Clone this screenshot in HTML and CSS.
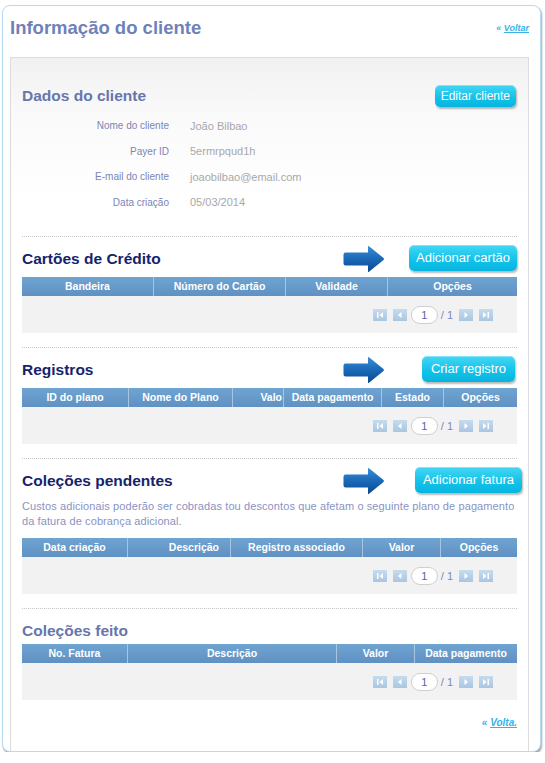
FILE: index.html
```html
<!DOCTYPE html>
<html lang="pt">
<head>
<meta charset="utf-8">
<title>Informação do cliente</title>
<link rel="stylesheet" href="styles.css">
</head>
<body>
<div class="page">
  <div class="top">
    <h1 class="title">Informação do cliente</h1>
    <span class="back back-top">« <a href="#">Voltar</a></span>
  </div>
  <div class="panel">
    <section class="sec sec-first">
      <div class="head head-sm">
        <h2 class="h h-muted">Dados do cliente</h2>
        <a class="btn btn-sm" href="#">Editar cliente</a>
      </div>
      <div class="fields">
        <span class="lbl">Nome do cliente</span><span class="val">João Bilbao</span>
        <span class="lbl">Payer ID</span><span class="val">5ermrpqud1h</span>
        <span class="lbl">E-mail do cliente</span><span class="val">joaobilbao@email.com</span>
        <span class="lbl">Data criação</span><span class="val">05/03/2014</span>
      </div>
    </section>

    <section class="sec">
      <div class="head">
        <h2 class="h">Cartões de Crédito</h2>
        <svg class="arrow" width="42" height="28" viewBox="0 0 42 28"><defs><linearGradient id="ag1" x1="0" y1="0" x2="0" y2="1"><stop offset="0" stop-color="#3a90d6"/><stop offset="0.45" stop-color="#1b6cba"/><stop offset="1" stop-color="#0a4990"/></linearGradient></defs><path d="M2.5 7.5 H25 V1.5 Q25 0.5 26 1.2 L40.5 13 Q41.5 14 40.5 15 L26 26.8 Q25 27.5 25 26.5 V20.5 H2.5 Q0.5 20.5 0.5 18.5 V9.5 Q0.5 7.5 2.5 7.5 Z" fill="url(#ag1)"/></svg>
        <span class="btn-slot"><a class="btn" href="#">Adicionar cartão</a></span>
      </div>
      <div class="thead cols-cards">
        <span class="th">Bandeira</span><span class="th">Número do Cartão</span><span class="th">Validade</span><span class="th">Opções</span>
      </div>
      <div class="tbody">
        <div class="pager">
          <span class="pg"><svg width="14" height="12" viewBox="0 0 14 12"><rect x="4" y="3" width="1.5" height="6" fill="#fff"/><path d="M10 3 V9 L6.5 6 Z" fill="#fff"/></svg></span>
          <span class="pg pg-gap"><svg width="14" height="12" viewBox="0 0 14 12"><path d="M8.5 3 V9 L5 6 Z" fill="#fff"/></svg></span>
          <span class="pg-input">1</span>
          <span class="pg-of">/ 1</span>
          <span class="pg pg-gap"><svg width="14" height="12" viewBox="0 0 14 12"><path d="M5.5 3 V9 L9 6 Z" fill="#fff"/></svg></span>
          <span class="pg pg-gap"><svg width="14" height="12" viewBox="0 0 14 12"><path d="M4 3 V9 L7.5 6 Z" fill="#fff"/><rect x="8.5" y="3" width="1.5" height="6" fill="#fff"/></svg></span>
        </div>
      </div>
    </section>

    <section class="sec">
      <div class="head">
        <h2 class="h">Registros</h2>
        <svg class="arrow" width="42" height="28" viewBox="0 0 42 28"><defs><linearGradient id="ag2" x1="0" y1="0" x2="0" y2="1"><stop offset="0" stop-color="#3a90d6"/><stop offset="0.45" stop-color="#1b6cba"/><stop offset="1" stop-color="#0a4990"/></linearGradient></defs><path d="M2.5 7.5 H25 V1.5 Q25 0.5 26 1.2 L40.5 13 Q41.5 14 40.5 15 L26 26.8 Q25 27.5 25 26.5 V20.5 H2.5 Q0.5 20.5 0.5 18.5 V9.5 Q0.5 7.5 2.5 7.5 Z" fill="url(#ag2)"/></svg>
        <span class="btn-slot"><a class="btn btn-reg" href="#">Criar registro</a></span>
      </div>
      <div class="thead cols-reg">
        <span class="th">ID do plano</span><span class="th">Nome do Plano</span><span class="th th-right">Valo</span><span class="th">Data pagamento</span><span class="th">Estado</span><span class="th">Opções</span>
      </div>
      <div class="tbody">
        <div class="pager">
          <span class="pg"><svg width="14" height="12" viewBox="0 0 14 12"><rect x="4" y="3" width="1.5" height="6" fill="#fff"/><path d="M10 3 V9 L6.5 6 Z" fill="#fff"/></svg></span>
          <span class="pg pg-gap"><svg width="14" height="12" viewBox="0 0 14 12"><path d="M8.5 3 V9 L5 6 Z" fill="#fff"/></svg></span>
          <span class="pg-input">1</span>
          <span class="pg-of">/ 1</span>
          <span class="pg pg-gap"><svg width="14" height="12" viewBox="0 0 14 12"><path d="M5.5 3 V9 L9 6 Z" fill="#fff"/></svg></span>
          <span class="pg pg-gap"><svg width="14" height="12" viewBox="0 0 14 12"><path d="M4 3 V9 L7.5 6 Z" fill="#fff"/><rect x="8.5" y="3" width="1.5" height="6" fill="#fff"/></svg></span>
        </div>
      </div>
    </section>

    <section class="sec">
      <div class="head">
        <h2 class="h">Coleções pendentes</h2>
        <svg class="arrow" width="42" height="28" viewBox="0 0 42 28"><defs><linearGradient id="ag3" x1="0" y1="0" x2="0" y2="1"><stop offset="0" stop-color="#3a90d6"/><stop offset="0.45" stop-color="#1b6cba"/><stop offset="1" stop-color="#0a4990"/></linearGradient></defs><path d="M2.5 7.5 H25 V1.5 Q25 0.5 26 1.2 L40.5 13 Q41.5 14 40.5 15 L26 26.8 Q25 27.5 25 26.5 V20.5 H2.5 Q0.5 20.5 0.5 18.5 V9.5 Q0.5 7.5 2.5 7.5 Z" fill="url(#ag3)"/></svg>
        <span class="btn-slot"><a class="btn btn-fat" href="#">Adicionar fatura</a></span>
      </div>
      <p class="desc">Custos adicionais poderão ser cobradas tou descontos que afetam o seguinte plano de pagamento da fatura de cobrança adicional.</p>
      <div class="thead cols-pend">
        <span class="th">Data criação</span><span class="th th-desc">Descrição</span><span class="th">Registro associado</span><span class="th">Valor</span><span class="th">Opções</span>
      </div>
      <div class="tbody">
        <div class="pager">
          <span class="pg"><svg width="14" height="12" viewBox="0 0 14 12"><rect x="4" y="3" width="1.5" height="6" fill="#fff"/><path d="M10 3 V9 L6.5 6 Z" fill="#fff"/></svg></span>
          <span class="pg pg-gap"><svg width="14" height="12" viewBox="0 0 14 12"><path d="M8.5 3 V9 L5 6 Z" fill="#fff"/></svg></span>
          <span class="pg-input">1</span>
          <span class="pg-of">/ 1</span>
          <span class="pg pg-gap"><svg width="14" height="12" viewBox="0 0 14 12"><path d="M5.5 3 V9 L9 6 Z" fill="#fff"/></svg></span>
          <span class="pg pg-gap"><svg width="14" height="12" viewBox="0 0 14 12"><path d="M4 3 V9 L7.5 6 Z" fill="#fff"/><rect x="8.5" y="3" width="1.5" height="6" fill="#fff"/></svg></span>
        </div>
      </div>
    </section>

    <section class="sec">
      <div class="head head-plain">
        <h2 class="h h-muted">Coleções feito</h2>
      </div>
      <div class="thead cols-feito">
        <span class="th">No. Fatura</span><span class="th">Descrição</span><span class="th">Valor</span><span class="th">Data pagamento</span>
      </div>
      <div class="tbody">
        <div class="pager">
          <span class="pg"><svg width="14" height="12" viewBox="0 0 14 12"><rect x="4" y="3" width="1.5" height="6" fill="#fff"/><path d="M10 3 V9 L6.5 6 Z" fill="#fff"/></svg></span>
          <span class="pg pg-gap"><svg width="14" height="12" viewBox="0 0 14 12"><path d="M8.5 3 V9 L5 6 Z" fill="#fff"/></svg></span>
          <span class="pg-input">1</span>
          <span class="pg-of">/ 1</span>
          <span class="pg pg-gap"><svg width="14" height="12" viewBox="0 0 14 12"><path d="M5.5 3 V9 L9 6 Z" fill="#fff"/></svg></span>
          <span class="pg pg-gap"><svg width="14" height="12" viewBox="0 0 14 12"><path d="M4 3 V9 L7.5 6 Z" fill="#fff"/><rect x="8.5" y="3" width="1.5" height="6" fill="#fff"/></svg></span>
        </div>
      </div>
      <div class="foot">
        <span class="back back-bottom">« <a href="#">Volta.</a></span>
      </div>
    </section>
  </div>
</div>
</body>
</html>
```

FILE: styles.css
```css
* { box-sizing: border-box; }
html, body { margin: 0; padding: 0; background: #fff; }
body { font-family: "Liberation Sans", Arial, sans-serif; }

.page {
  margin: 5px 0 0 2px;
  width: 539px;
  height: 747px;
  border: 1px solid #b6daf2;
  border-radius: 8px;
  box-shadow: 1px 2px 2px rgba(0, 0, 0, 0.35);
  display: flex;
  flex-direction: column;
  background: #fff;
}

.top {
  height: 51px;
  display: flex;
  align-items: center;
  justify-content: space-between;
  padding: 0 11px 7px 7px;
}
.title {
  margin: 0;
  font-size: 18.5px;
  line-height: 22px;
  font-weight: bold;
  color: #6e82b8;
}
.back {
  font-style: italic;
  font-weight: bold;
  color: #35b2e6;
}
.back a { color: #35b2e6; text-decoration: underline; }
.back-top { font-size: 9px; }
.back-bottom { font-size: 10px; }

.panel {
  margin-left: 7px;
  width: 519px;
  flex: 1;
  border: 1px solid #dcdcdc;
  border-bottom: 0;
  background: linear-gradient(#f1f1f1, #fafafa 60px, #fff 140px);
  padding: 0 11px;
}

.sec { border-top: 1px dotted #c6c6c6; margin-top: 14px; }
.sec-first { border-top: 0; margin-top: 0; padding-top: 27px; }

.head {
  display: flex;
  align-items: center;
  height: 26px;
  margin: 8px 0 6px;
}
.head-sm { height: 22px; margin: 0; justify-content: space-between; }
.head-plain { height: 18px; margin: 13px 0 4px; }

.h {
  flex: 1;
  margin: 0;
  font-size: 15.5px;
  line-height: 18px;
  font-weight: bold;
  color: #14246c;
  padding-top: 2px;
}
.h-muted { color: #6676ad; }
.head-sm .h, .head-plain .h { padding-top: 0; }

.arrow { display: block; flex: none; margin-top: 2px; }
.btn-slot {
  width: 132px;
  display: flex;
  justify-content: flex-end;
}

.btn {
  display: inline-block;
  height: 26px;
  line-height: 26px;
  padding: 0 7px;
  border-radius: 5px;
  font-size: 13px;
  color: #fff;
  text-decoration: none;
  background: linear-gradient(#46d6f4, #13c3ea 55%, #07b4de);
  box-shadow: 1px 2px 2px rgba(0, 0, 0, 0.28), inset 0 1px 0 rgba(255, 255, 255, 0.35);
  white-space: nowrap;
}
.btn-sm {
  height: 22px;
  line-height: 22px;
  font-size: 12px;
  padding: 0 6px;
  margin-right: 1px;
}
.btn-reg { margin-right: 2px; padding: 0 9px; }
.btn-fat { margin-right: -5px; padding: 0 8px; }

.fields {
  display: grid;
  grid-template-columns: 147px 1fr;
  column-gap: 21px;
  grid-auto-rows: 25.5px;
  align-items: center;
  margin: 6px 0 21px;
}
.lbl { text-align: right; color: #7b85b3; font-size: 10px; }
.val { color: #a8a8a8; font-size: 11px; }

.desc {
  margin: 3px 0 9px;
  font-size: 11px;
  line-height: 15px;
  color: #8a93c3;
  letter-spacing: 0.1px;
}

.thead {
  display: grid;
  height: 19px;
  background: linear-gradient(#6fa4d1, #5f91c3);
}
.cols-cards { grid-template-columns: 131px 132px 102px 130px; }
.cols-reg { grid-template-columns: 106px 104px 51px 98px 62px 74px; }
.cols-pend { grid-template-columns: 105px 103px 132px 78px 77px; }
.cols-feito { grid-template-columns: 105px 209px 78px 103px; }

.th {
  color: #fff;
  font-size: 10.5px;
  font-weight: bold;
  line-height: 19px;
  text-align: center;
  white-space: nowrap;
  overflow: hidden;
  border-left: 1px solid #a6c5e1;
}
.th:first-child { border-left: 0; }
.th-right { text-align: right; padding-right: 1px; }
.th-desc { text-align: right; padding-right: 11px; }

.tbody {
  height: 37px;
  background: #f2f2f2;
  display: flex;
  align-items: center;
  justify-content: flex-end;
  padding-right: 24px;
}
.pager { display: flex; align-items: center; }
.pg {
  display: block;
  width: 14px;
  height: 12px;
  background: linear-gradient(#c6dbee, #a9c6e1);
}
.pg svg { display: block; }
.pg-gap { margin-left: 6px; }
.pg-input {
  margin-left: 4px;
  width: 27px;
  height: 18px;
  border: 1px solid #cfcfcf;
  border-radius: 9px;
  background: #fff;
  font-size: 11px;
  line-height: 16px;
  text-align: center;
  color: #56659c;
}
.pg-of {
  margin-left: 3px;
  font-size: 11px;
  color: #7a88b8;
}

.foot {
  margin-top: 15px;
  line-height: 12px;
  text-align: right;
}
```
